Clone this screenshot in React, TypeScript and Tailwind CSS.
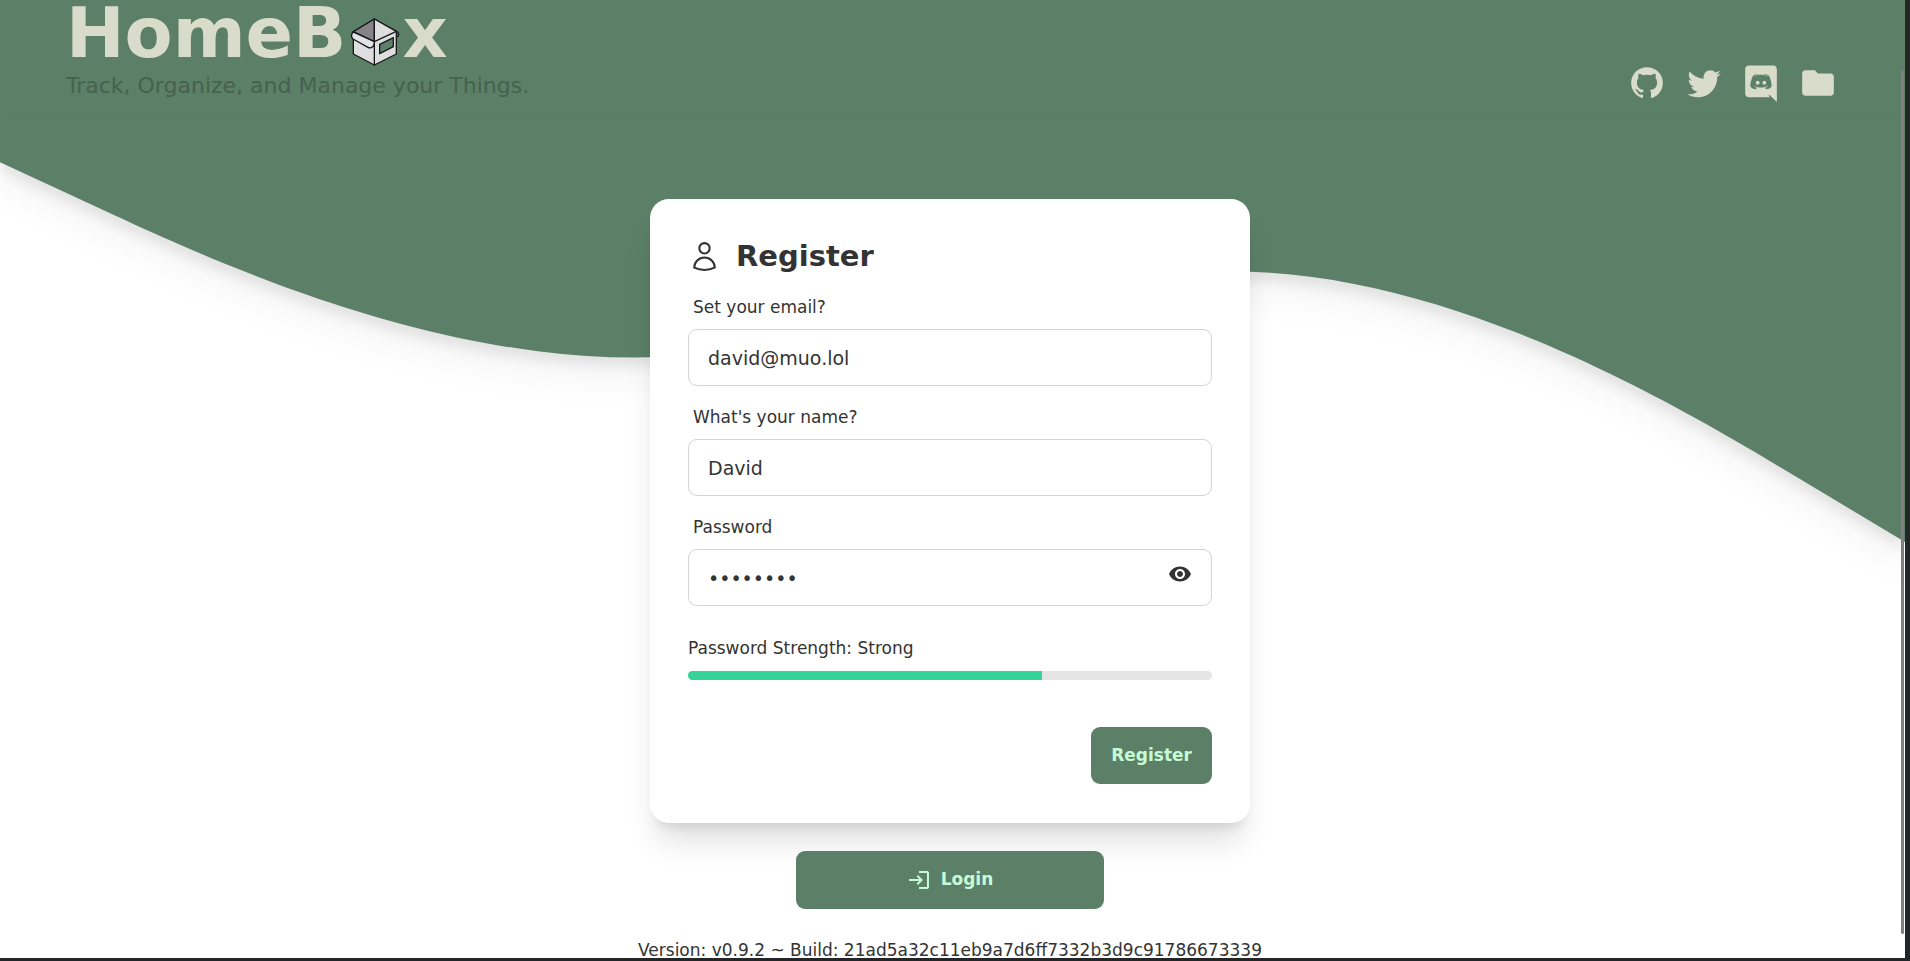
import { useState } from "react";
import { MdFolder, MdLogin, MdVisibility } from "react-icons/md";

const GITHUB =
  "M12,2A10,10 0 0,0 2,12C2,16.42 4.87,20.17 8.84,21.5C9.34,21.58 9.5,21.27 9.5,21C9.5,20.77 9.5,20.14 9.5,19.31C6.73,19.91 6.14,17.97 6.14,17.97C5.68,16.81 5.03,16.5 5.03,16.5C4.12,15.88 5.1,15.9 5.1,15.9C6.1,15.97 6.63,16.93 6.63,16.93C7.5,18.45 8.97,18 9.54,17.76C9.63,17.11 9.89,16.67 10.17,16.42C7.95,16.17 5.62,15.31 5.62,11.5C5.62,10.39 6,9.5 6.65,8.79C6.55,8.54 6.2,7.5 6.75,6.15C6.75,6.15 7.59,5.88 9.5,7.17C10.29,6.95 11.15,6.84 12,6.84C12.85,6.84 13.71,6.95 14.5,7.17C16.41,5.88 17.25,6.15 17.25,6.15C17.8,7.5 17.45,8.54 17.35,8.79C18,9.5 18.38,10.39 18.38,11.5C18.38,15.32 16.04,16.16 13.81,16.41C14.17,16.72 14.5,17.33 14.5,18.26C14.5,19.6 14.5,20.68 14.5,21C14.5,21.27 14.66,21.59 15.17,21.5C19.14,20.16 22,16.42 22,12A10,10 0 0,0 12,2Z";
const TWITTER =
  "M22.46,6C21.69,6.35 20.86,6.58 20,6.69C20.88,6.16 21.56,5.32 21.88,4.31C21.05,4.81 20.13,5.16 19.16,5.36C18.37,4.5 17.26,4 16,4C13.65,4 11.73,5.92 11.73,8.29C11.73,8.63 11.77,8.96 11.84,9.27C8.28,9.09 5.11,7.38 3,4.79C2.63,5.42 2.42,6.16 2.42,6.94C2.42,8.43 3.17,9.75 4.33,10.5C3.62,10.5 2.96,10.3 2.38,10C2.38,10 2.38,10 2.38,10.03C2.38,12.11 3.86,13.85 5.82,14.24C5.46,14.34 5.08,14.39 4.69,14.39C4.42,14.39 4.15,14.36 3.89,14.31C4.43,16 6,17.26 7.89,17.29C6.43,18.45 4.58,19.13 2.56,19.13C2.22,19.13 1.88,19.11 1.54,19.07C3.44,20.29 5.7,21 8.12,21C16,21 20.33,14.46 20.33,8.79C20.33,8.6 20.33,8.42 20.32,8.23C21.16,7.63 21.88,6.87 22.46,6Z";
const DISCORD =
  "M22,24L16.75,19L17.38,21H4.5A2.5,2.5 0 0,1 2,18.5V3.5A2.5,2.5 0 0,1 4.5,1H19.5A2.5,2.5 0 0,1 22,3.5V24M12,6.8C9.32,6.8 7.44,7.95 7.44,7.95C8.47,7.03 10.27,6.5 10.27,6.5L10.1,6.33C8.41,6.36 6.88,7.53 6.88,7.53C5.16,11.12 5.27,14.22 5.27,14.22C6.67,16.03 8.75,15.9 8.75,15.9L9.46,15C8.21,14.73 7.42,13.62 7.42,13.62C7.42,13.62 9.3,14.9 12,14.9C14.7,14.9 16.58,13.62 16.58,13.62C16.58,13.62 15.79,14.73 14.54,15L15.25,15.9C15.25,15.9 17.33,16.03 18.73,14.22C18.73,14.22 18.84,11.12 17.12,7.53C17.12,7.53 15.59,6.36 13.9,6.33L13.73,6.5C13.73,6.5 15.53,7.03 16.56,7.95C16.56,7.95 14.68,6.8 12,6.8M9.93,10.59C10.58,10.59 11.11,11.16 11.1,11.86C11.1,12.55 10.58,13.13 9.93,13.13C9.29,13.13 8.77,12.55 8.77,11.86C8.77,11.16 9.28,10.59 9.93,10.59M14.1,10.59C14.75,10.59 15.27,11.16 15.27,11.86C15.27,12.55 14.75,13.13 14.1,13.13C13.46,13.13 12.94,12.55 12.94,11.86C12.94,11.16 13.45,10.59 14.1,10.59Z";

function Glyph({ d }: { d: string }) {
  return (
    <svg viewBox="0 0 24 24" className="size-[38px] fill-current" aria-hidden="true">
      <path d={d} />
    </svg>
  );
}

function BoxLogo() {
  return (
    <svg viewBox="48 54 150 144" className="h-12 w-[50px]" aria-hidden="true">
      <g stroke="#16181a" strokeWidth="4" strokeLinejoin="round" strokeLinecap="round">
        <path d="M188 94Q197 102 193 107L187 112" fill="none" />
        <path d="M58 96 121 57 187 94V162L121 195 58 162Z" fill="#dededf" />
        <path d="M121 57 58 95 121 125Z" fill="#858588" />
        <path d="M121 57V125L187 94Z" fill="#dededf" />
        <path d="M121 125V195" />
        <path d="M57 96 121 125Q121 137 115 141 109 146 102 142L57 117Q48 108 57 96Z" fill="#e4e4e6" />
        <path d="M137 133 178 113V140L137 161Z" fill="#5c7f67" />
      </g>
    </svg>
  );
}

function Wave() {
  return (
    <div className="absolute inset-x-0 top-0 -z-10 text-[#5c7f67]">
      <div className="h-[120px] bg-current" />
      <svg
        viewBox="0 0 1440 320"
        className="block w-full fill-current [filter:drop-shadow(0_24px_15px_rgb(0_0_0/0.04))_drop-shadow(0_9px_6px_rgb(0_0_0/0.08))]"
        aria-hidden="true"
      >
        <path d="M0,32L80,69C160,106,320,179.6,480,179.6C640,179.6,800,105.3,960,115.5C1120,126,1280,223,1360,271L1440,319L1440,-1L0,-1Z" />
      </svg>
    </div>
  );
}

type FieldProps = { id: string; label: string; type: string; initial: string };

function Field({ id, label, type, initial }: FieldProps) {
  const [value, setValue] = useState(initial);
  const [shown, setShown] = useState(false);
  const secret = type === "password";
  return (
    <div className="relative flex flex-col">
      <label htmlFor={id} className="px-[5px] py-[10px] text-[17px] leading-[23px]">
        {label}
      </label>
      <input
        id={id}
        type={secret && shown ? "text" : type}
        value={value}
        onChange={(e) => setValue(e.target.value)}
        className="h-[57px] w-full rounded-[9px] border border-[#d4d4d4] bg-white px-[19px] text-[19px] outline-none"
      />
      {secret && (
        <button
          type="button"
          aria-label="Toggle password visibility"
          onClick={() => setShown(!shown)}
          className="absolute right-5 bottom-5"
        >
          <MdVisibility className="size-6" />
        </button>
      )}
    </div>
  );
}

const links = [
  { label: "GitHub", icon: <Glyph d={GITHUB} /> },
  { label: "Twitter", icon: <Glyph d={TWITTER} /> },
  { label: "Discord", icon: <Glyph d={DISCORD} /> },
  { label: "Documentation", icon: <MdFolder className="size-[38px]" /> },
];

const strength = 67.5;

export default function App() {
  return (
    <div className="relative h-screen overflow-hidden border-r-[5px] border-b-[3px] border-[#232526] bg-white font-['DejaVu_Sans',sans-serif] text-[#333333]">
      <div className="relative isolate h-full overflow-hidden pr-[5px]">
        <Wave />
        <header className="flex items-end justify-between pr-[63px] pl-[66px] text-[#d9dccb]">
          <div>
            <h1 className="flex items-center text-[70px] leading-[66px] font-bold">
              HomeB
              <span className="mt-[18px] mr-0.5 ml-1">
                <BoxLogo />
              </span>
              x
            </h1>
            <p className="pt-1 text-[22px] leading-8 text-[#46624f]">
              Track, Organize, and Manage your Things.
            </p>
          </div>
          <nav className="flex gap-[19px]">
            {links.map((l) => (
              <a key={l.label} href="#" aria-label={l.label}>
                {l.icon}
              </a>
            ))}
          </nav>
        </header>

        <main className="mt-[97px] flex flex-col items-center">
          <form
            onSubmit={(e) => e.preventDefault()}
            className="flex w-full max-w-[600px] flex-col gap-[10px] rounded-[19px] bg-white px-[38px] pt-[38px] pb-[39px] shadow-[0_24px_30px_-6px_rgba(0,0,0,0.12),0_10px_12px_-7px_rgba(0,0,0,0.11)]"
          >
            <h2 className="flex items-center gap-[15px] text-[29px] leading-[39px] font-bold">
              <svg
                viewBox="0 0 24 24"
                className="size-[33px] fill-none stroke-current stroke-[1.5]"
                strokeLinecap="round"
                strokeLinejoin="round"
                aria-hidden="true"
              >
                <path d="M15.75 6a3.75 3.75 0 1 1-7.5 0 3.75 3.75 0 0 1 7.5 0ZM4.501 20.118a7.5 7.5 0 0 1 14.998 0A17.933 17.933 0 0 1 12 21.75c-2.676 0-5.216-.584-7.499-1.632Z" />
              </svg>
              Register
            </h2>
            <Field id="email" label="Set your email?" type="text" initial="david@muo.lol" />
            <Field id="name" label="What's your name?" type="text" initial="David" />
            <Field id="password" label="Password" type="password" initial="hunter22" />
            <div className="pt-5">
              <p id="strength" className="text-[17px] leading-6">
                Password Strength: Strong
              </p>
              <div
                role="progressbar"
                aria-labelledby="strength"
                aria-valuenow={strength}
                className="mt-[11px] h-[9px] overflow-hidden rounded-[5px] bg-[#e5e5e6]"
              >
                <div className="h-full bg-[#36d399]" style={{ width: `${strength}%` }} />
              </div>
            </div>
            <button
              type="submit"
              className="mt-[37px] h-[57px] self-end rounded-[9px] bg-[#5c7f67] px-5 text-[17px] font-bold text-[#c5fbd6]"
            >
              Register
            </button>
          </form>
          <button
            type="button"
            className="mt-7 flex h-[58px] w-full max-w-[308px] items-center justify-center gap-[10px] rounded-[9px] bg-[#5c7f67] text-[17px] font-bold text-[#c5fbd6]"
          >
            <MdLogin className="size-6" />
            Login
          </button>
          <p className="mt-[29px] text-[17px] leading-6 whitespace-nowrap">
            Version: v0.9.2 ~ Build: 21ad5a32c11eb9a7d6ff7332b3d9c91786673339
          </p>
        </main>
      </div>
      <div className="absolute top-[70px] right-px bottom-6 w-[3px] rounded-sm bg-[#808080]" />
    </div>
  );
}
